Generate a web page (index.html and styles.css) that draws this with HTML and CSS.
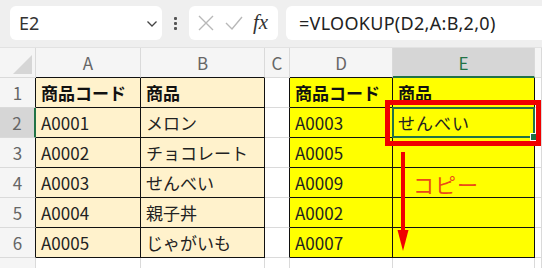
FILE: index.html
```html
<!DOCTYPE html>
<html lang="ja">
<head>
    <meta charset="UTF-8">
    <title>VLOOKUP</title>
    <link rel="stylesheet" href="styles.css">
</head>
<body>
    <div class="toolbar">
        <div class="name-box">
            <span>E2</span>
            <svg class="chevron" width="12" height="8" viewBox="0 0 12 8"><path d="M1.5 1.5 L6 6 L10.5 1.5" fill="none" stroke="#444" stroke-width="1.3"/></svg>
        </div>
        <div class="dots"><i></i><i></i><i></i></div>
        <div class="fx-box">
            <svg width="18" height="18" viewBox="0 0 18 18"><path d="M2 2 L16 16 M16 2 L2 16" stroke="#b8b8b8" stroke-width="1.4"/></svg>
            <svg width="20" height="18" viewBox="0 0 20 18"><path d="M2 9 L8 15 L18 3" fill="none" stroke="#b8b8b8" stroke-width="1.4"/></svg>
            <span class="fx">fx</span>
        </div>
        <div class="formula">=VLOOKUP(D2,A:B,2,0)</div>
    </div>

    <div class="sheet">
        <div class="corner"><span class="tri"></span></div>
        <div class="colh top">A</div>
        <div class="colh top">B</div>
        <div class="colh">C</div>
        <div class="colh top">D</div>
        <div class="colh sel">E</div>
        <div class="colh last"></div>

        <div class="rowh edge">1</div>
        <div class="cell peach bold">商品コード</div>
        <div class="cell peach bold">商品</div>
        <div class="cell edge"></div>
        <div class="cell yellow bold">商品コード</div>
        <div class="cell yellow bold">商品</div>
        <div class="cell last"></div>

        <div class="rowh edge selrow">2</div>
        <div class="cell peach">A0001</div>
        <div class="cell peach">メロン</div>
        <div class="cell edge"></div>
        <div class="cell yellow">A0003</div>
        <div class="cell yellow active">せんべい<span class="handle"></span></div>
        <div class="cell last"></div>

        <div class="rowh edge">3</div>
        <div class="cell peach">A0002</div>
        <div class="cell peach">チョコレート</div>
        <div class="cell edge"></div>
        <div class="cell yellow">A0005</div>
        <div class="cell yellow"></div>
        <div class="cell last"></div>

        <div class="rowh edge">4</div>
        <div class="cell peach">A0003</div>
        <div class="cell peach">せんべい</div>
        <div class="cell edge"></div>
        <div class="cell yellow">A0009</div>
        <div class="cell yellow"></div>
        <div class="cell last"></div>

        <div class="rowh edge">5</div>
        <div class="cell peach">A0004</div>
        <div class="cell peach">親子丼</div>
        <div class="cell edge"></div>
        <div class="cell yellow">A0002</div>
        <div class="cell yellow"></div>
        <div class="cell last"></div>

        <div class="rowh edge">6</div>
        <div class="cell peach">A0005</div>
        <div class="cell peach">じゃがいも</div>
        <div class="cell edge"></div>
        <div class="cell yellow">A0007</div>
        <div class="cell yellow"></div>
        <div class="cell last"></div>

        <div class="rowh short"></div>
        <div class="cell short"></div>
        <div class="cell short"></div>
        <div class="cell short"></div>
        <div class="cell short"></div>
        <div class="cell short"></div>
        <div class="cell short"></div>

        <!-- annotations drawn over the sheet -->
        <div class="red-box"></div>
        <svg class="arrow" width="14" height="100" viewBox="0 0 14 100"><path d="M7 0 L7 80" stroke="#f00000" stroke-width="4"/><path d="M1.5 78 L12.5 78 L7 99 Z" fill="#f00000"/></svg>
        <div class="copy">コピー</div>
    </div>
</body>
</html>
```

FILE: styles.css
```css
body {
    margin: 0;
    width: 542px;
    height: 268px;
    overflow: hidden;
    background-color: #ffffff;
    font-family: "Noto Sans CJK JP", "Noto Sans", sans-serif;
    color: #222;
}
.toolbar {
    height: 48px;
    box-sizing: border-box;
    background-color: #efefef;
    border-bottom: 1px solid #e2e2e2;
    display: flex;
    align-items: flex-start;
    padding: 6px 0 0 10px;
}
.name-box {
    width: 152px;
    height: 34px;
    box-sizing: border-box;
    background-color: white;
    border-radius: 6px;
    display: flex;
    align-items: center;
    justify-content: space-between;
    padding: 0 4px 0 9px;
    font-family: "Noto Sans", sans-serif;
    font-size: 18px;
    color: #333;
}
.chevron {
    margin-top: 2px;
}
.dots {
    width: 27px;
    height: 34px;
    display: flex;
    flex-direction: column;
    align-items: center;
    justify-content: center;
    gap: 2px;
}
.dots i {
    width: 3px;
    height: 3px;
    background-color: #555;
    border-radius: 1px;
}
.fx-box {
    width: 89px;
    height: 34px;
    box-sizing: border-box;
    background-color: white;
    border-radius: 6px;
    display: flex;
    align-items: center;
    gap: 9px;
    padding-left: 8px;
}
.fx {
    font-family: "Liberation Serif", serif;
    font-style: italic;
    font-size: 21px;
    color: #333;
    margin-top: -2px;
}
.formula {
    margin-left: 8px;
    flex: 1;
    height: 34px;
    background-color: white;
    border-radius: 6px 0 0 6px;
    display: flex;
    align-items: center;
    padding-left: 13px;
    font-family: "Noto Sans", sans-serif;
    font-size: 18px;
    letter-spacing: 0.3px;
    color: #222;
}
.sheet {
    position: relative;
    display: grid;
    grid-template-columns: 36px 105px 124px 25px 103px 142px 1fr;
    grid-template-rows: repeat(7, 30px) 10px;
}
.sheet > div {
    box-sizing: border-box;
    border-right: 1px solid #dadada;
    border-bottom: 1px solid #dadada;
}
.corner {
    background-color: #f5f5f5;
    position: relative;
}
.tri {
    position: absolute;
    right: 3px;
    bottom: 3px;
    width: 0;
    height: 0;
    border-left: 19px solid transparent;
    border-bottom: 19px solid #d6d6d6;
}
.colh {
    background-color: #f5f5f5;
    display: flex;
    align-items: center;
    justify-content: center;
    font-size: 17px;
    color: #666;
}
.sheet > .colh.top {
    border-bottom-color: #111;
}
.sheet > .colh.sel {
    background-color: #d6d6d6;
    color: #217346;
    border-bottom: 2px solid #217346;
}
.rowh {
    background-color: #f5f5f5;
    display: flex;
    align-items: center;
    justify-content: center;
    font-size: 17px;
    color: #666;
}
.sheet > .rowh.edge {
    border-right-color: #111;
}
.sheet > .rowh.selrow {
    background-color: #d6d6d6;
    border-right: 2px solid #217346;
}
.cell {
    display: flex;
    align-items: center;
    padding-left: 5px;
    font-size: 17px;
    color: #222;
    white-space: nowrap;
}
.sheet > .peach {
    background-color: #fff2cc;
    border-right-color: #111;
    border-bottom-color: #111;
}
.sheet > .yellow {
    background-color: #ffff00;
    border-right-color: #111;
    border-bottom-color: #111;
}
.sheet > .edge {
    border-right-color: #111;
}
.sheet > .short {
    border-bottom: none;
}
.bold {
    font-weight: bold;
    color: #111;
}
.active {
    position: relative;
    letter-spacing: 1px;
}
.active::before {
    content: "";
    position: absolute;
    left: -1px;
    top: -1px;
    right: -1px;
    bottom: -1px;
    border: 2px solid #217346;
}
.handle {
    position: absolute;
    right: -4px;
    bottom: -4px;
    width: 6px;
    height: 6px;
    background-color: #217346;
    border: 1px solid white;
}
.sheet > .red-box {
    position: absolute;
    left: 385px;
    top: 52px;
    width: 156px;
    height: 46px;
    box-sizing: border-box;
    border: 5px solid #f00000;
}
.arrow {
    position: absolute;
    left: 396px;
    top: 104px;
}
.sheet > .copy {
    position: absolute;
    left: 413px;
    top: 121px;
    border: none;
    font-size: 21px;
    letter-spacing: 1px;
    color: #ec4a18;
}
```
